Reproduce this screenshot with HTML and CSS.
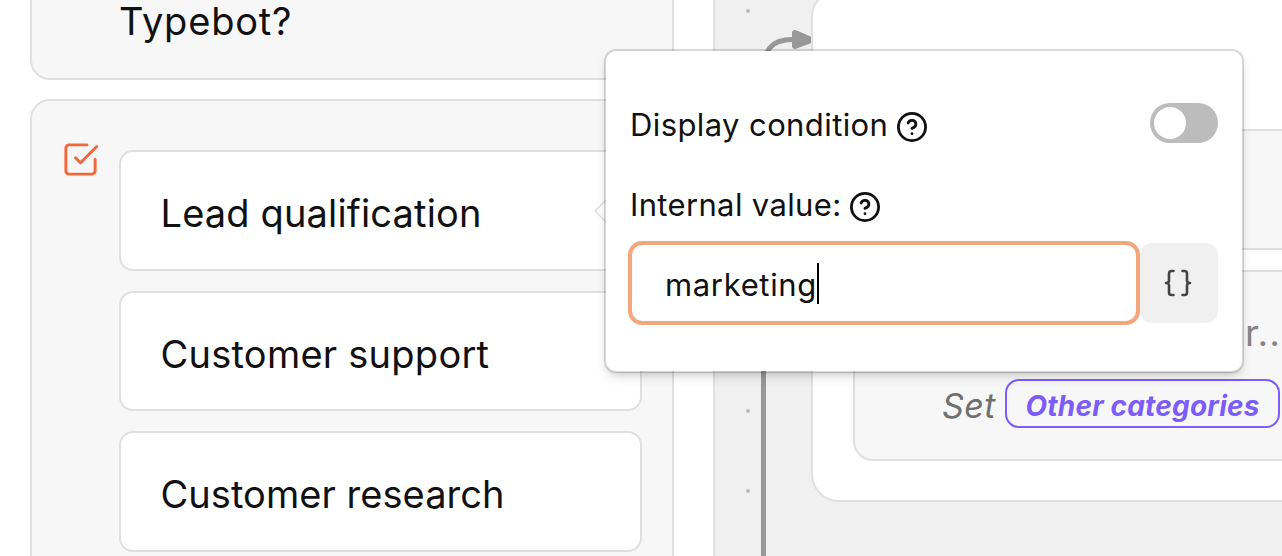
FILE: index.html
```
<!DOCTYPE html>
<html lang="en">
<head>
<meta charset="utf-8">
<title>Typebot editor</title>
<link rel="stylesheet" href="styles.css">
</head>
<body>
<main class="canvas">
  <svg class="edges" width="1282" height="556" viewBox="0 0 1282 556">
    <g class="dots"><circle cx="748" cy="11" r="2"/><circle cx="748" cy="411" r="2"/><circle cx="748" cy="491" r="2"/></g>
    <path class="edge" d="M763.500 556V76C763.500 50 770 39.500 793 39.500"/>
    <path class="arrow" d="M795 33L811 40L795 46Z"/>
  </svg>
  <section class="group group-left">
    <article class="block question"><p class="question-text">Typebot?</p></article>
    <article class="block choices">
      <svg class="check-icon" viewBox="0 0 24 24"><path d="M9 11l3 3L22 4"/><path d="M21 12v7a2 2 0 0 1-2 2H5a2 2 0 0 1-2-2V5a2 2 0 0 1 2-2h11"/></svg>
      <div class="items">
        <div class="item"><span class="t1">Lead qualification</span></div>
        <div class="item"><span class="t2">Customer support</span></div>
        <div class="item"><span class="t3">Customer research</span></div>
      </div>
    </article>
  </section>
  <section class="group group-right">
    <article class="block hidden-step"></article>
    <article class="block set-step">
      <p class="ellipsis">r..</p>
      <p class="set-row"><em class="set">Set</em><span class="tag"><em>Other categories</em></span></p>
    </article>
  </section>
  <svg class="pointer" width="12" height="24" viewBox="0 0 12 24"><path d="M12 1L1 12L12 23"/></svg>
  <section class="popover">
    <div class="row switch-row">
      <span class="label t4">Display condition</span>
      <svg class="help" viewBox="0 0 24 24"><circle cx="12" cy="12" r="10.2"/><path d="M9.09 9a3 3 0 0 1 5.83 1c0 2-3 3-3 3M12 17h.01"/></svg>
      <span class="switch"><span class="thumb"></span></span>
    </div>
    <div class="row value-row">
      <span class="label t5">Internal value:</span>
      <svg class="help" viewBox="0 0 24 24"><circle cx="12" cy="12" r="10.2"/><path d="M9.09 9a3 3 0 0 1 5.83 1c0 2-3 3-3 3M12 17h.01"/></svg>
    </div>
    <div class="field-row">
      <div class="field"><span class="t6">marketing</span><span class="caret"></span></div>
      <div class="braces"><svg width="28" height="28" viewBox="0 0 28 28"><path d="M9.500 2H7.500Q5 2 5 4.500V11.500Q5 14 2 14Q5 14 5 16.500V23.500Q5 26 7.500 26H9.500M18.500 2H20.500Q23 2 23 4.500V11.500Q23 14 26 14Q23 14 23 16.500V23.500Q23 26 20.500 26H18.500"/></svg></div>
    </div>
  </section>
</main>
</body>
</html>
```
FILE: styles.css
```
* { box-sizing: border-box; }
body { margin: 0; font-family: Inter, "Liberation Sans", sans-serif; color: #111; }
p { margin: 0; }
.canvas { position: relative; width: 1282px; height: 556px; overflow: hidden; background: #f0f0f0; white-space: nowrap; }
.edges { position: absolute; left: 0; top: 0; }
.dots { fill: #bcbcbc; }
.edge { fill: none; stroke: #989898; stroke-width: 5; }
.arrow { fill: #989898; stroke: #989898; stroke-width: 6; stroke-linejoin: round; }
.group { position: absolute; background: #fff; border: 2px solid #e0e0e0; }
.group-left { left: -20px; top: -60px; width: 735px; height: 680px; padding: 17px 39px 0 48px; display: flex; flex-direction: column; gap: 19px; }
.block { background: #f7f7f7; border: 2px solid #e0e0e0; border-radius: 20px; }
.question { height: 121px; flex: none; padding: 35px 0 0 87px; }
.question-text { font-size: 38px; line-height: 50px; letter-spacing: .8px; }
.choices { height: 520px; flex: none; display: flex; padding: 49px 30px 0 30px; }
.check-icon { width: 39px; height: 39px; flex: none; margin: -10px 19px 0 -1px; fill: none; stroke: #f2673a; stroke-width: 1.8; stroke-linecap: round; stroke-linejoin: round; }
.items { flex: 1; display: flex; flex-direction: column; gap: 20px; }
.item { height: 120.5px; padding: 6px 0 0 39.5px; display: flex; align-items: center; background: #fff; border: 2px solid #e0e0e0; border-radius: 14px; font-size: 38px; letter-spacing: .1px; }
.t1 { letter-spacing: .15px; }
.t2 { letter-spacing: .25px; }
.t3 { letter-spacing: .05px; }
.group-right { left: 811px; top: -11px; width: 560px; height: 513px; border-radius: 28px; padding: 138px 40px 0; display: flex; flex-direction: column; gap: 20px; }
.hidden-step { height: 121px; flex: none; }
.set-step { height: 191px; flex: none; padding: 36px 0 0 87px; color: #707070; }
.ellipsis { padding-left: 303px; font-size: 37px; line-height: 50px; color: #858585; letter-spacing: 1px; }
.set-row { display: flex; align-items: center; margin-top: 21px; font-size: 34px; }
.set { width: 63px; letter-spacing: .4px; padding-top: 3px; }
.tag { width: 275px; height: 49px; border: 2.5px solid #7c5cfa; border-radius: 14px; color: #7c5cfa; font-size: 28px; font-weight: 700; letter-spacing: .2px; display: flex; align-items: center; justify-content: center; padding-top: 5px; }
.pointer { position: absolute; left: 594px; top: 199px; fill: #fff; stroke: #e0e0e0; stroke-width: 1.5; }
.popover { position: absolute; left: 604px; top: 49px; width: 640px; height: 324px; padding: 50px 24px 0 24px; background: #fff; background-clip: padding-box; border: 2px solid rgba(0,0,0,.14); border-radius: 12px; box-shadow: 0 6px 12px -2px rgba(0,0,0,.12), 0 3px 5px -2px rgba(0,0,0,.1); }
.row { display: flex; align-items: center; height: 48px; }
.label { font-size: 31px; letter-spacing: .4px; margin-top: -2px; }
.help { width: 32px; height: 32px; margin: 3px 0 0 8px; flex: none; fill: none; stroke: #111; stroke-width: 2.1; stroke-linecap: round; stroke-linejoin: round; }
.switch { width: 68px; height: 40px; margin: -4px 0 0 auto; padding: 4px; border-radius: 20px; background: #bcbcbc; }
.thumb { display: block; width: 32px; height: 32px; border-radius: 50%; background: #fff; }
.value-row { margin-top: 32px; }
.t5 { letter-spacing: .35px; }
.field-row { display: flex; margin: 12px 0 0 -2px; align-items: center; }
.field { width: 512px; height: 84px; flex: none; border: 4px solid #f4a77c; border-radius: 14px; padding-left: 33px; display: flex; align-items: center; font-size: 31px; letter-spacing: .65px; }
.t6 { padding-top: 3px; }
.caret { width: 2px; height: 41px; background: #000; }
.braces { width: 78px; height: 80px; border-radius: 12px; background: #f0f0f0; display: flex; align-items: center; justify-content: center; }
.braces svg { fill: none; stroke: #444; stroke-width: 2.6; stroke-linecap: round; stroke-linejoin: round; margin-right: 2px; }
```
